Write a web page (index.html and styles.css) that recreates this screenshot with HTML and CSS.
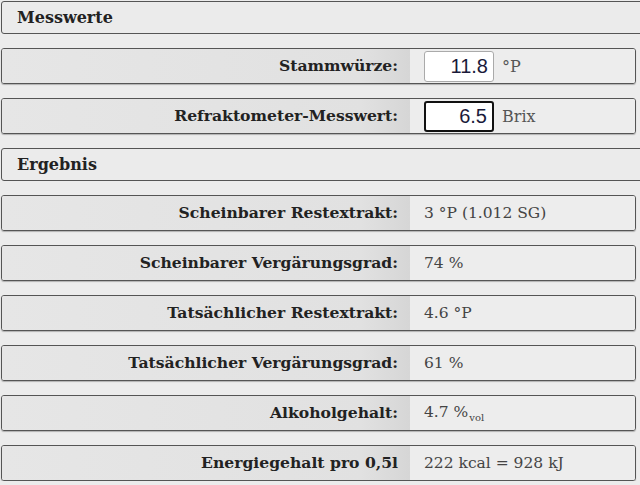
FILE: index.html
```html
<!DOCTYPE html>
<html lang="de">
<head>
    <meta charset="UTF-8">
    <meta name="viewport" content="width=device-width, initial-scale=1.0">
    <title>Refraktometer-Rechner</title>
    <link rel="stylesheet" href="styles.css">
</head>
<body>
    <div class="calc">
        <div class="section">Messwerte</div>
        <div class="row">
            <label class="label" for="og">Stammwürze:</label>
            <div class="value">
                <input type="text" id="og" class="num" value="11.8">
                <span class="unit">°P</span>
            </div>
        </div>
        <div class="row">
            <label class="label" for="brix">Refraktometer-Messwert:</label>
            <div class="value">
                <input type="text" id="brix" class="num focus" value="6.5">
                <span class="unit">Brix</span>
            </div>
        </div>

        <div class="section">Ergebnis</div>
        <div class="row">
            <div class="label">Scheinbarer Restextrakt:</div>
            <div class="value"><span>3 °P (1.012 SG)</span></div>
        </div>
        <div class="row">
            <div class="label">Scheinbarer Vergärungsgrad:</div>
            <div class="value"><span>74 %</span></div>
        </div>
        <div class="row">
            <div class="label">Tatsächlicher Restextrakt:</div>
            <div class="value"><span>4.6 °P</span></div>
        </div>
        <div class="row">
            <div class="label">Tatsächlicher Vergärungsgrad:</div>
            <div class="value"><span>61 %</span></div>
        </div>
        <div class="row">
            <div class="label">Alkoholgehalt:</div>
            <div class="value"><span>4.7 %<sub>vol</sub></span></div>
        </div>
        <div class="row">
            <div class="label">Energiegehalt pro 0,5l</div>
            <div class="value"><span>222 kcal = 928 kJ</span></div>
        </div>
    </div>
</body>
</html>
```

FILE: styles.css
```css
body {
    margin: 0;
    padding: 1px 0 0 1px;
    background-color: #ececec;
    font-family: "DejaVu Serif", serif;
    color: #222;
    overflow: hidden;
}
.calc {
    width: 635px;
    display: flex;
    flex-direction: column;
    gap: 14px;
}
.section {
    width: 660px;
    height: 33px;
    line-height: 31px;
    padding-left: 15px;
    box-sizing: border-box;
    border: 1px solid #555;
    border-radius: 3px;
    background-color: #ebebeb;
    font-weight: bold;
    font-size: 16px;
    color: #222;
}
.row {
    display: flex;
    height: 36px;
    box-sizing: border-box;
    border: 1px solid #555;
    border-radius: 3px;
    box-shadow: 0 1px 1px rgba(0, 0, 0, 0.25);
    overflow: hidden;
}
.label {
    width: 408px;
    flex: none;
    padding-right: 12px;
    box-sizing: border-box;
    text-align: right;
    line-height: 34px;
    font-weight: bold;
    font-size: 15.6px;
    background: linear-gradient(to right, #e6e6e6 0%, #e1e1e1 88%, #d6d6d6 100%);
}
.value {
    flex: 1;
    display: flex;
    align-items: center;
    padding-left: 14px;
    background-color: #ededed;
    font-size: 15.5px;
    color: #444;
}
.value sub {
    font-size: 10px;
    margin-left: 1px;
}
.num {
    width: 70px;
    height: 31px;
    box-sizing: border-box;
    padding: 0 5px;
    border: 1px solid #aaa;
    border-radius: 3px;
    background: #fff;
    text-align: right;
    font-family: "Liberation Sans", Arial, sans-serif;
    font-size: 20px;
    color: #1a1a3a;
}
.num.focus {
    border: 2px solid #111;
}
.unit {
    margin-left: 8px;
    font-size: 16px;
    color: #555;
}
```
